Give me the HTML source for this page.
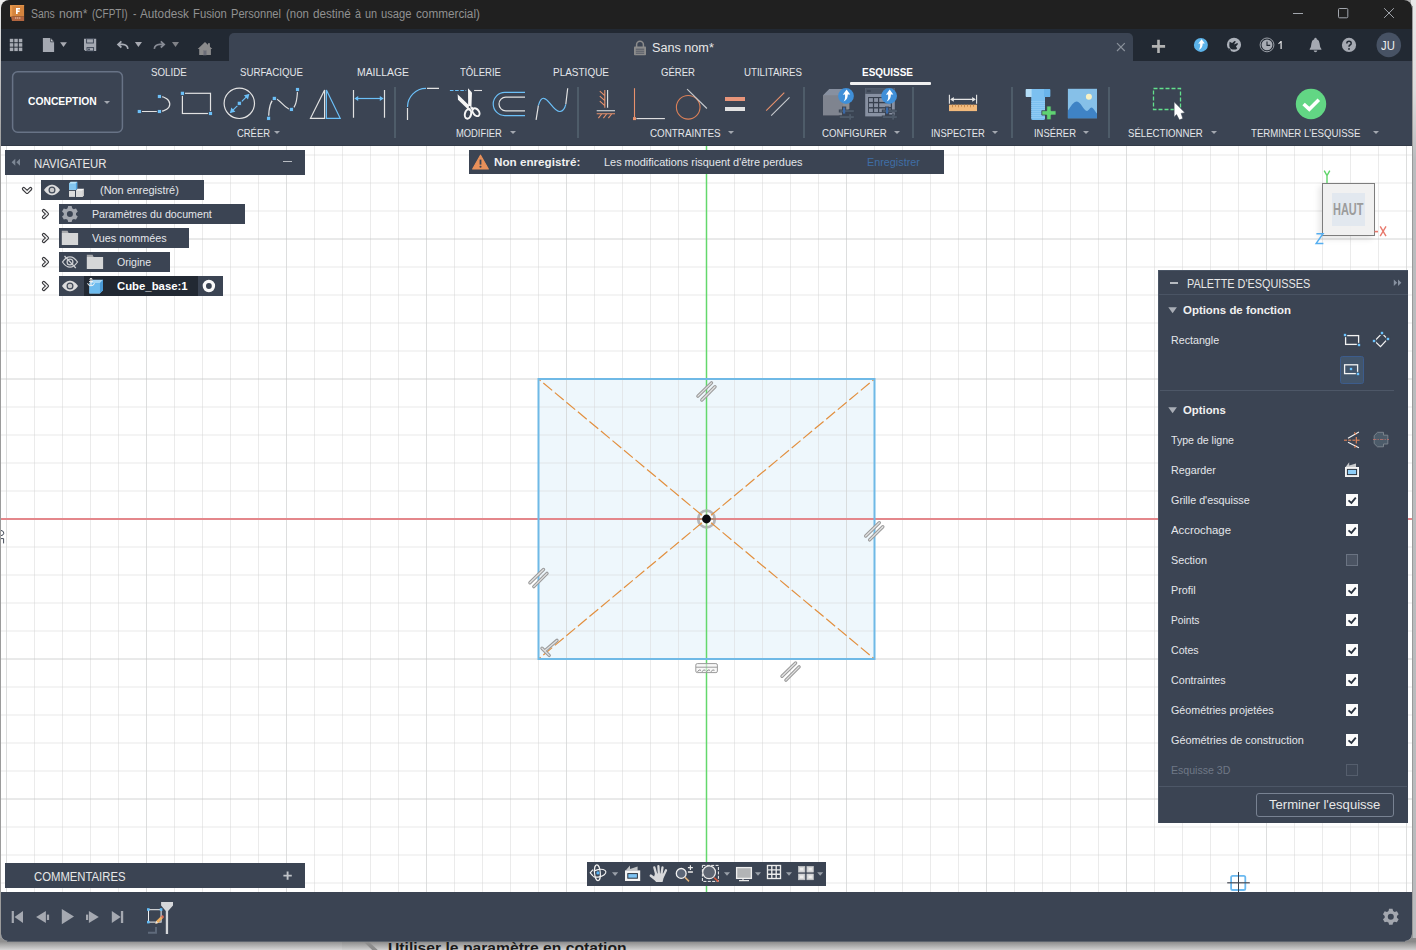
<!DOCTYPE html>
<html lang="fr">
<head>
<meta charset="utf-8">
<title>Sans nom* - Autodesk Fusion</title>
<style>
html,body{margin:0;padding:0;}
body{width:1416px;height:950px;overflow:hidden;position:relative;background:#b2b2b2;font-family:"Liberation Sans",sans-serif;}
#root{position:absolute;left:0;top:0;width:1416px;height:950px;overflow:hidden;}
.t{position:absolute;white-space:nowrap;line-height:1;transform-origin:0 50%;}
.a{position:absolute;}
svg{position:absolute;overflow:visible;}
#win{position:absolute;left:1px;top:0;width:1411px;height:941px;border-radius:8px 8px 7px 7px;overflow:hidden;background:#fff;}
.bx{position:absolute;background:#3b4453;}
.sep{position:absolute;width:2px;top:87px;height:51px;background:#4e5c69;}
.dd{position:absolute;width:0;height:0;border-left:3.2px solid transparent;border-right:3.2px solid transparent;border-top:3.6px solid #a3a8b0;}
.cb{position:absolute;left:1346px;width:12px;height:12px;background:#fbfbfb;}
</style>
</head>
<body>
<div id="root">
<!-- desktop behind the window -->
<div class="a" style="left:0;top:0;width:9px;height:950px;background:linear-gradient(to bottom,#ececec 0,#d4d4d4 40px,#a4a4a4 130px,#9b9b9b 180px,#9b9b9b 100%)"></div>
<div class="a" style="left:1411px;top:0;width:5px;height:950px;background:linear-gradient(to bottom,#e8e8e8 0,#dcdcdc 90px,#babcbe 160px,#b9bbbd 100%)"></div>
<div class="a" style="left:1411px;top:6px;width:2px;height:940px;background:#9a9a9a"></div>
<div class="a" style="left:0;top:938px;width:1416px;height:12px;background:linear-gradient(to bottom,#8a8a8a 0,#8a8a8a 3.6px,#d0d0d0 12px)"></div>
<div class="a" style="left:0;top:938px;width:342px;height:12px;background:linear-gradient(to bottom,#909090 0,#909090 3.6px,#d6d6d6 12px)"></div>
<svg style="left:364px;top:941px" width="16" height="10"><path d="M0.6 1.4L5 1L14.2 9.4H8.6Z" fill="#8c8c8c"/></svg>
<div class="a" style="left:7px;top:941px;width:1398px;height:1px;background:#5d646e"></div>
<span class="t" style="left:388px;top:940.3px;font-size:15.5px;font-weight:700;color:#1a1a1a;transform:scaleX(1.011)">Utiliser le paramètre en cotation</span>
<div id="win">
<!-- title bar -->
<div class="a" style="left:0;top:0;width:1411px;height:29px;background:#202020"></div>
<!-- tab bar -->
<div class="a" style="left:0;top:29px;width:1411px;height:32px;background:#222933"></div>
<div class="a" style="left:228px;top:33px;width:904px;height:28px;background:#3b4453;border-radius:5px 5px 0 0"></div>
<!-- ribbon -->
<div class="a" style="left:0;top:61px;width:1411px;height:85px;background:#3b4453"></div>
<div class="a" style="left:0;top:145px;width:1411px;height:1px;background:#333b48"></div>
<!-- timeline bar -->
<div class="a" style="left:0;top:892px;width:1411px;height:49px;background:#3b4453"></div>
</div>
<svg style="left:0;top:0" width="1416" height="62" viewBox="0 0 1416 62">
<!-- app icon -->
<rect x="10" y="5" width="14.1" height="11.6" fill="#d4843e"/><rect x="10" y="5.6" width="2.3" height="11" fill="#e89a4e"/><path d="M12.3 5H24.1V6.2H12.3Z" fill="#e0934a"/><path d="M11 16.6H24.1V21H12Z" fill="#b4663f"/><path d="M16 8H20V9.5H17.7V10.6H19.6V12H17.7V14H16Z" fill="#ffffff"/><path d="M15 18H16.4M17 18H18.4M19 18H20.4" stroke="#f0d0c0" stroke-width="1"/>
<!-- window controls -->
<g fill="none" stroke="#a2a6ad" stroke-width="1"><path d="M1293 13.5H1303"/><rect x="1338.5" y="8.5" width="9.3" height="9.3" rx="1"/><path d="M1384.1 8.2L1393.9 17.9M1393.9 8.2L1384.1 17.9"/></g>
<!-- data panel grid -->
<g fill="#a7abb3"><rect x="9.8" y="38.8" width="3.5" height="3.5"/><rect x="14.3" y="38.8" width="3.5" height="3.5"/><rect x="18.8" y="38.8" width="3.5" height="3.5"/><rect x="9.8" y="43.2" width="3.5" height="3.5"/><rect x="14.3" y="43.2" width="3.5" height="3.5"/><rect x="18.8" y="43.2" width="3.5" height="3.5"/><rect x="9.8" y="47.6" width="3.5" height="3.5"/><rect x="14.3" y="47.6" width="3.5" height="3.5"/><rect x="18.8" y="47.6" width="3.5" height="3.5"/></g>
<!-- file -->
<path d="M42.9 38.1H50.6L54.1 41.8V52H42.9Z" fill="#a5a9b2"/><path d="M50.6 38.1V41.8H54.1Z" fill="#d0d3d8" stroke="#222933" stroke-width=".7"/>
<path d="M60.1 42.2H66.9L63.5 46.9Z" fill="#a8aab2"/>
<!-- save -->
<path d="M84 38.8H96.2V51H85.4L84 49.6Z" fill="#a5a9b2"/><rect x="86.6" y="38.8" width="6.8" height="4.2" fill="#a5a9b2" stroke="#3a4352" stroke-width=".9"/><rect x="87" y="47.6" width="6.6" height="3.4" fill="#a5a9b2" stroke="#3a4352" stroke-width=".9"/><rect x="88" y="48.6" width="2" height="1.6" fill="#4a5362"/>
<!-- undo / redo -->
<path d="M121.4 41.3L118 44.4L121.4 47.5M118.3 44.4H122.4Q127.4 44.6 127.9 48.8" fill="none" stroke="#a9adb6" stroke-width="1.7"/>
<path d="M134.9 42.1H142L138.4 46.9Z" fill="#a8aab2"/>
<path d="M160.8 41.3L164.2 44.4L160.8 47.5M163.9 44.4H159.8Q154.8 44.6 154.3 48.8" fill="none" stroke="#878b95" stroke-width="1.7"/>
<path d="M172 42.1H179L175.5 46.9Z" fill="#808288"/>
<!-- home -->
<path d="M205 42L212.3 48.9H210.9V55H199.2V48.9H197.7Z" fill="#8b8b8c"/><rect x="208" y="43.2" width="1.9" height="4" fill="#8b8b8c"/><rect x="203.5" y="50.6" width="2.9" height="4.4" fill="#6a6d78" stroke="#7a7a80" stroke-width=".5"/>
<!-- lock -->
<path d="M636.6 47V44.6A3.4 3.4 0 0 1 643.4 44.6V47" fill="none" stroke="#8c8c8c" stroke-width="1.5"/><rect x="634" y="46.6" width="12" height="8.6" rx=".8" fill="#8c8c8c"/><path d="M635.8 49.2H644.2M635.8 51.2H644.2M635.8 53.2H644.2" stroke="#3b4453" stroke-width=".7"/>
<!-- close tab / new tab -->
<path d="M1117 43.2L1124.8 51M1124.8 43.2L1117 51" stroke="#8a919b" stroke-width="1.2"/>
<path d="M1158.5 39.8V53M1151.9 46.4H1165.1" stroke="#b2b2b2" stroke-width="2.6"/>
<!-- extensions badge -->
<circle cx="1200.9" cy="44.9" r="7" fill="#5cb3ea"/><path d="M1201.6 39.2L1204.8 43.6L1202.7 43.4C1202.7 46.2 1201.8 48.4 1198.8 49.8C1200.2 47.8 1200.3 45.6 1200.1 43.4L1198.2 43.7Z" fill="#ffffff"/>
<!-- job status -->
<circle cx="1234" cy="44.85" r="7.05" fill="#adb2bb"/><path d="M1229.6 41.8L1232.1 43.1L1234.6 41L1235.9 41.5L1233.9 44.6L1237.4 43L1238 44.1L1235.9 46.4L1237.2 48.2Q1236.6 49.4 1235.4 49.5H1232.6Q1230.8 49.2 1230.2 48.2Q1229 46.6 1229.3 45.1Z" fill="#222933"/><path d="M1228.6 48.4L1230.6 50.6" stroke="#222933" stroke-width="1.3"/>
<!-- clock -->
<circle cx="1267" cy="44.9" r="6.9" fill="none" stroke="#a7abb3" stroke-width=".9"/><circle cx="1267" cy="44.9" r="5.4" fill="#a7abb3"/><path d="M1267 41.4V45.4H1270.2" fill="none" stroke="#222933" stroke-width="1.1"/>
<path d="M1278.2 43.4L1280.7 41.1H1281.7V49H1280.5V42.8L1278.7 44.3Z" fill="#e8e8ea"/>
<!-- bell -->
<path d="M1315.5 37.8Q1316.6 37.8 1316.8 39.2Q1319.4 40.2 1319.6 43.6Q1319.8 47.6 1321.4 49V49.8H1309.7V49Q1311.2 47.6 1311.4 43.6Q1311.6 40.2 1314.2 39.2Q1314.4 37.8 1315.5 37.8Z" fill="#a5a9b2"/><path d="M1313.6 50.6H1317.4Q1317 52.2 1315.5 52.2Q1314 52.2 1313.6 50.6Z" fill="#a5a9b2"/>
<!-- help -->
<circle cx="1349" cy="44.9" r="7.1" fill="#a5a9b2"/><path d="M1346.8 43.4Q1346.8 41.2 1349 41.2Q1351.2 41.2 1351.2 43.2Q1351.2 44.4 1350 45Q1349 45.6 1349 46.8" fill="none" stroke="#222933" stroke-width="1.5"/><circle cx="1349" cy="48.9" r=".95" fill="#222933"/>
<!-- avatar -->
<circle cx="1388.8" cy="44.9" r="12.3" fill="#475264"/>
</svg>
<!-- ribbon -->
<svg style="left:0;top:60px" width="130" height="80" viewBox="0 60 130 80"><rect x="12.6" y="71.7" width="109.8" height="60.6" rx="5" fill="none" stroke="#687386" stroke-width="1.5"/></svg>
<div class="dd" style="left:104.4px;top:100.6px"></div>
<div class="a" style="left:850px;top:81.6px;width:81px;height:3px;background:#f0f0f0;border-radius:1px"></div>
<div class="sep" style="left:394px"></div><div class="sep" style="left:577px"></div><div class="sep" style="left:803px"></div><div class="sep" style="left:912px"></div><div class="sep" style="left:1011px"></div><div class="sep" style="left:1108px"></div>
<div class="dd" style="left:274px;top:130.9px"></div><div class="dd" style="left:510px;top:130.9px"></div><div class="dd" style="left:727.6px;top:130.9px"></div><div class="dd" style="left:894px;top:130.9px"></div><div class="dd" style="left:992px;top:130.9px"></div><div class="dd" style="left:1083px;top:130.9px"></div><div class="dd" style="left:1210.8px;top:130.9px"></div><div class="dd" style="left:1372.8px;top:130.9px"></div>
<svg style="left:0;top:0" width="1416" height="146" viewBox="0 0 1416 146">
<defs><rect id="bs" x="-2.1" y="-2.1" width="4.2" height="4.2" fill="#6cc0f8" stroke="#3b4453" stroke-width="0.9"/></defs>
<g fill="none" stroke="#e2e2e2" stroke-width="1.2">
<!-- line/arc -->
<path d="M139.3 111.5H159.4M159.4 96.5A10.4 7.5 0 0 1 159.4 111.5"/>
<!-- rectangle -->
<rect x="182.4" y="93.3" width="28.1" height="20.2"/>
<!-- circle -->
<circle cx="239.3" cy="103.3" r="15.2"/>
<!-- spline -->
<path d="M268.6 118.3C268.8 106 271 100.4 274.3 98.4C279.5 98 286 110.5 291.4 109.4C295.6 107.6 297.3 99 297.5 89.5"/>
<!-- mirror -->
<path d="M324.6 90V118.3H310.5Z"/><path d="M326.4 90V118.3H340.2Z" stroke="#6cc0f8"/>
<!-- dimension -->
<path d="M353.5 90V117.8M384.5 90V117.8"/><path d="M356 98.5H382" stroke="#6cc0f8"/>
<!-- fillet -->
<path d="M407.5 108V120M427 88.4H439"/><path d="M407.5 107A18.6 18.6 0 0 1 426 88.4" stroke="#6cc0f8"/>
<!-- trim -->
<path d="M449.9 90.5H466.2" stroke="#6cc0f8" stroke-width="1.1" stroke-dasharray="3.6 1.6"/><path d="M474.1 90.5H482" stroke-width="1.1"/>
<!-- offset -->
<path d="M525 92.4H504.8A11.6 11.6 0 0 0 504.8 115.6H525" stroke="#6cc0f8"/><path d="M525 97.2H505.8A6.8 6.8 0 0 0 505.8 110.8H525"/>
<!-- spline2 -->
<path d="M536.1 119.8L538.4 105.3M565.8 104.3L567.7 88.2"/><path d="M538.4 105.3C540 100 542 98 543.8 98.3C549 98.6 554 112.2 560.1 111.5C563 111 564.8 108.4 565.8 104.3" stroke="#6cc0f8"/>
</g>
<path d="M354.3 98.5L358.2 95.9V101.1ZM383.7 98.5L379.8 95.9V101.1Z" fill="#6cc0f8"/>
<path d="M230.4 112.6L248.9 94.4" stroke="#6cc0f8" stroke-width="1.2"/><path d="M230 113L231.3 107.6L235.4 111.7ZM249.3 94L243.9 95.3L248 99.4Z" fill="#6cc0f8"/>
<use href="#bs" x="139.3" y="111.5"/><use href="#bs" x="159.4" y="111.5"/><use href="#bs" x="159.4" y="96.5"/>
<use href="#bs" x="182.4" y="93.3"/><use href="#bs" x="210.5" y="113.5"/><use href="#bs" x="239.3" y="103.3"/>
<use href="#bs" x="268.6" y="118.3"/><use href="#bs" x="274.3" y="98.4"/><use href="#bs" x="291.4" y="109.4"/><use href="#bs" x="297.5" y="89.5"/>
<!-- scissors -->
<g fill="#f6f6f6"><path d="M468 88.2L472 92.4L471.4 107.6L468.2 108.2Z"/><path d="M457.6 94.2L458 99.8L468.4 109.8L470.8 107Z"/></g>
<g fill="none" stroke="#f6f6f6" stroke-width="2"><ellipse cx="468" cy="114" rx="3.1" ry="4.7" transform="rotate(14 468 114)"/><ellipse cx="476" cy="112.2" rx="2.9" ry="4.4" transform="rotate(-38 476 112.2)"/></g><path d="M469 108L468.6 110M471 107.6L473.6 109.4" stroke="#f6f6f6" stroke-width="2.4"/><circle cx="469.6" cy="107" r=".9" fill="#3b4453"/>
<!-- constraints -->
<g fill="none" stroke-width="1.1"><path d="M604.8 90V107.7M599.8 91.2L604.8 95.6M599.8 96.2L604.8 100.6M599.8 101.2L604.8 105.6M596.7 113.7H615M601.6 114L598.4 118.2M606.6 114L603.4 118.2M611.6 114L608.4 118.2" stroke="#e8916c"/><path d="M607.6 90V107.7M596.7 110.7H615" stroke="#e6e6e6"/>
<path d="M634.5 88.2V117.4" stroke="#e8916c"/><path d="M636.4 118.6H664.9" stroke="#e6e6e6"/>
<circle cx="688.2" cy="107.3" r="11.8" stroke="#dc8058"/><path d="M687.1 89.2L706.9 108.5" stroke="#c8ccd0"/>
<path d="M766.2 110.7L784.3 92.6" stroke="#e8916c"/><path d="M771.2 115.6L789.5 97.3" stroke="#c8ccd0"/></g>
<rect x="633" y="117.1" width="3" height="3" fill="#e8916c"/>
<rect x="725" y="97" width="20" height="4" fill="#e8957a"/><rect x="725" y="107" width="20" height="4" fill="#e2e2e2"/>
<!-- configure 1 -->
<path d="M823 95.4L829.4 89H849.4V108.8L843 115.2H823Z" fill="#8c8d90"/><path d="M823 95.4L829.4 89H849.4L843 95.4Z" fill="#8790a0"/><rect x="823" y="95.4" width="20" height="19.8" fill="#7f848f"/>
<g id="giz"><path d="M838.8 109.4H842V106.6H846.2V109.4H854.6V112.6H846.2V114.4H849V113.4H851.4V115.6H854.6V118.6H851.4V120.4H849V118.6H838.8V115.6H842V112.6H838.8Z" fill="#3b4453"/><rect x="839.8" y="110.1" width="14" height="1.9" fill="#4e5a69"/><rect x="839.8" y="116.1" width="14" height="1.9" fill="#4e5a69"/><rect x="843" y="107.5" width="2.2" height="6.1" fill="#3a69a8"/><rect x="849.2" y="114.2" width="1.8" height="5.4" fill="#4e5a69"/></g>
<g id="badge"><circle cx="846" cy="96" r="7.9" fill="#3f8fd8"/><path d="M846.6 89.6L850.2 94.6L847.8 94.4C847.8 97.6 846.8 100 843.6 101.6C845.2 99.4 845.2 97 845 94.4L842.8 94.8Z" fill="#ffffff"/></g>
<!-- configure 2 -->
<rect x="865.2" y="88.1" width="29.6" height="28.3" fill="#8891a2"/><rect x="865.2" y="88.1" width="29.6" height="5.8" fill="#4b5564"/><rect x="867" y="90.2" width="3.8" height="1.6" fill="#3b4453"/><rect x="868.1" y="97" width="23.8" height="15.9" fill="#363f4d"/>
<g fill="#8891a2"><rect x="869" y="98.1" width="3.9" height="3.8"/><rect x="874.1" y="98.1" width="3.9" height="3.8"/><rect x="879.2" y="98.1" width="11.6" height="3.8"/><rect x="869" y="103.3" width="3.9" height="3.8"/><rect x="874.1" y="103.3" width="3.9" height="3.8"/><rect x="879.2" y="103.3" width="11.6" height="3.8"/><rect x="869" y="108.5" width="3.9" height="3.6"/><rect x="874.1" y="108.5" width="3.9" height="3.6"/><rect x="879.2" y="108.5" width="11.6" height="3.6"/></g>
<use href="#giz" x="43"/><use href="#badge" x="43.1"/>
<!-- inspect -->
<rect x="949" y="104.7" width="28" height="6.4" fill="#f2ba7c"/><path d="M952.5 104.7v2.6M955.5 104.7v2M958.5 104.7v2.6M961.5 104.7v2M964.5 104.7v2.6M967.5 104.7v2M970.5 104.7v2.6M973.5 104.7v2" stroke="#c88a4c" stroke-width="1"/>
<path d="M949.4 94.8V103.8M976.6 94.8V103.8M951 99.4H975" stroke="#e6e6e6" stroke-width="1.1" fill="none"/><path d="M950.2 99.4L953.8 97V101.8ZM975.8 99.4L972.2 97V101.8Z" fill="#e6e6e6"/>
<!-- insert bolt -->
<path d="M1026.6 89H1049.4Q1050.2 89 1050.2 89.8V96.2Q1050.2 97 1049.4 97H1026.6Q1025.8 97 1025.8 96.2V89.8Q1025.8 89 1026.6 89Z" fill="#7cc0f0"/><path d="M1026.6 89H1031.6V97H1026.6Q1025.8 97 1025.8 96.2V89.8Q1025.8 89 1026.6 89Z" fill="#b4ddf6"/><path d="M1044 89H1049.4Q1050.2 89 1050.2 89.8V96.2Q1050.2 97 1049.4 97H1044Z" fill="#6ab4ea"/>
<path d="M1031.2 97H1045V118.4Q1045 120 1043.4 120H1032.8Q1031.2 120 1031.2 118.4Z" fill="#7cc0f0"/><path d="M1031.2 101.5H1045M1031.2 103.5H1045M1031.2 105.5H1045M1031.2 107.5H1045M1031.2 109.5H1045M1031.2 111.5H1045M1031.2 113.5H1045M1031.2 115.5H1045M1031.2 117.5H1045" stroke="#98d0f6" stroke-width=".7"/>
<path d="M1046.7 106H1051.1V110.7H1056V115.1H1051.1V119.8H1046.7V115.1H1041.8V110.7H1046.7Z" fill="#5fd272" stroke="#3b4453" stroke-width=".8"/>
<!-- insert image -->
<rect x="1067.9" y="88.8" width="29.1" height="29.4" fill="#86c0e8"/><path d="M1067.9 110.5C1071 106 1073.6 101.4 1076.9 101.4C1080.6 101.6 1083.4 110 1087 111C1088.8 110.6 1089.8 107.4 1091.5 107.4C1093.4 107.6 1095 111.4 1097 113.4V118.2H1067.9Z" fill="#3f83c5"/><circle cx="1088.9" cy="96.8" r="3" fill="#f8f1c4"/>
<!-- select -->
<rect x="1153.5" y="88.5" width="27" height="21" fill="none" stroke="#62e08c" stroke-width="1.3" stroke-dasharray="4 2" stroke-dashoffset="0"/>
<path d="M1174.1 101.8L1185 112.7L1181.2 113.4L1182.9 118.6L1179.4 120L1176.5 114.6L1174.1 117.2Z" fill="#ffffff" stroke="#3b4453" stroke-width=".6"/>
<!-- finish sketch -->
<circle cx="1311" cy="104.05" r="15.2" fill="#62d684"/><path d="M1303.6 104L1309.3 109.2L1318.8 99.8" fill="none" stroke="#ffffff" stroke-width="3.6"/>
</svg>
<!-- canvas -->
<svg style="left:0;top:0" width="1416" height="950" viewBox="0 0 1416 950">
<defs><clipPath id="cv"><rect x="1" y="146" width="1411" height="746"/></clipPath></defs>
<g clip-path="url(#cv)">
<rect x="538.5" y="379" width="336" height="280" fill="#eef7fc"/>
<path d="M-21.5 146V892M34.5 146V892M62.5 146V892M90.5 146V892M118.5 146V892M174.5 146V892M202.5 146V892M230.5 146V892M258.5 146V892M314.5 146V892M342.5 146V892M370.5 146V892M398.5 146V892M454.5 146V892M482.5 146V892M510.5 146V892M538.5 146V892M594.5 146V892M622.5 146V892M650.5 146V892M678.5 146V892M734.5 146V892M762.5 146V892M790.5 146V892M818.5 146V892M874.5 146V892M902.5 146V892M930.5 146V892M958.5 146V892M1014.5 146V892M1042.5 146V892M1070.5 146V892M1098.5 146V892M1154.5 146V892M1182.5 146V892M1210.5 146V892M1238.5 146V892M1294.5 146V892M1322.5 146V892M1350.5 146V892M1378.5 146V892M1434.5 146V892" stroke="#d8d8d8" stroke-opacity=".5" stroke-width="1" fill="none"/>
<path d="M6.5 146V892M146.5 146V892M286.5 146V892M426.5 146V892M566.5 146V892M846.5 146V892M986.5 146V892M1126.5 146V892M1266.5 146V892M1406.5 146V892" stroke="#cfd0d0" stroke-opacity=".7" stroke-width="1" fill="none"/>
<path d="M0 127H1416M0 155H1416M0 183H1416M0 211H1416M0 267H1416M0 295H1416M0 323H1416M0 351H1416M0 407H1416M0 435H1416M0 463H1416M0 491H1416M0 547H1416M0 575H1416M0 603H1416M0 631H1416M0 687H1416M0 715H1416M0 743H1416M0 771H1416M0 827H1416M0 855H1416M0 883H1416M0 911H1416" stroke="#d8d8d8" stroke-opacity=".55" stroke-width="1" fill="none"/>
<path d="M0 239H1416M0 379H1416M0 659H1416M0 799H1416" stroke="#c4c6c6" stroke-opacity=".75" stroke-width="1" fill="none"/>
<path d="M0 519H1416" stroke="#e4878b" stroke-width="2" fill="none"/>
<path d="M706.5 146V892" stroke="#63d86c" stroke-width="1.5" fill="none"/>
<circle cx="706.5" cy="519" r="8.3" fill="#fff" fill-opacity=".75" stroke="#b4b5b9" stroke-width="2.8"/>
<path d="M697 519H716" stroke="#b98a78" stroke-width="2"/>
<path d="M706.5 509.5V528.5" stroke="#8fc98a" stroke-width="1.5"/>
<path d="M706.5 519L538.5 379M706.5 519L874.5 379M706.5 519L538.5 659M706.5 519L874.5 659" stroke="#e28f3e" stroke-width="1.2" stroke-dasharray="11.5 3.5" stroke-dashoffset="9.1" fill="none"/>
<circle cx="706.5" cy="519" r="4.4" fill="#0b0b12"/>
<rect x="538.5" y="379" width="336" height="280" fill="none" stroke="#6fb9e6" stroke-width="2"/>
<path d="M697.9 396.1L711.5 382.9" stroke="#9a9a9a" stroke-width="3.4" stroke-linecap="round"/><path d="M697.9 396.1L711.5 382.9" stroke="#e2e2e2" stroke-width="1.3" stroke-linecap="round"/>
<path d="M701.8 400.0L715.0 386.8" stroke="#9a9a9a" stroke-width="3.4" stroke-linecap="round"/><path d="M701.8 400.0L715.0 386.8" stroke="#e2e2e2" stroke-width="1.3" stroke-linecap="round"/>
<path d="M865.7 536.0L879.3 522.8" stroke="#9a9a9a" stroke-width="3.4" stroke-linecap="round"/><path d="M865.7 536.0L879.3 522.8" stroke="#e2e2e2" stroke-width="1.3" stroke-linecap="round"/>
<path d="M869.6 539.9L882.8 526.7" stroke="#9a9a9a" stroke-width="3.4" stroke-linecap="round"/><path d="M869.6 539.9L882.8 526.7" stroke="#e2e2e2" stroke-width="1.3" stroke-linecap="round"/>
<path d="M529.9 582.7L543.5 569.5" stroke="#9a9a9a" stroke-width="3.4" stroke-linecap="round"/><path d="M529.9 582.7L543.5 569.5" stroke="#e2e2e2" stroke-width="1.3" stroke-linecap="round"/>
<path d="M533.8 586.6L547.0 573.4" stroke="#9a9a9a" stroke-width="3.4" stroke-linecap="round"/><path d="M533.8 586.6L547.0 573.4" stroke="#e2e2e2" stroke-width="1.3" stroke-linecap="round"/>
<path d="M782.0 676.2L795.6 663.0" stroke="#9a9a9a" stroke-width="3.4" stroke-linecap="round"/><path d="M782.0 676.2L795.6 663.0" stroke="#e2e2e2" stroke-width="1.3" stroke-linecap="round"/>
<path d="M785.9 680.1L799.1 666.9" stroke="#9a9a9a" stroke-width="3.4" stroke-linecap="round"/><path d="M785.9 680.1L799.1 666.9" stroke="#e2e2e2" stroke-width="1.3" stroke-linecap="round"/>
<path d="M545.2 650.5L557 640.4M542 648.3L549.2 655.4" stroke="#9a9a9a" stroke-width="3.4" stroke-linecap="round"/><path d="M545.2 650.5L557 640.4M542 648.3L549.2 655.4" stroke="#e2e2e2" stroke-width="1.3" stroke-linecap="round"/>
<rect x="695.8" y="663.6" width="21.6" height="9" rx="1.5" fill="#f4f4f4" fill-opacity=".6" stroke="#9a9a9a" stroke-width="1"/><path d="M696 667.2H717.2" stroke="#9a9a9a" stroke-width="1"/><path d="M697.5 671.8q1.5-3 3.5-1.5M702 671.8q1.5-3 3.5-1.5M706.5 671.8q1.5-3 3.5-1.5M711 671.8q1.5-3 3.5-1.5" stroke="#8c8c8c" stroke-width="1" fill="none"/>
<path d="M1 530.4Q4 531 3.8 533.2Q3.6 535.4 1 535.6M1 538.6H3.6V543.4" fill="none" stroke="#454d5a" stroke-width="1"/>
</g>
</svg>
<!-- navigator -->
<div class="bx" style="left:5px;top:150px;width:300px;height:25px"></div>
<svg style="left:11px;top:158px" width="10" height="9"><path d="M4.3 0.8L0.6 4.3L4.3 7.8ZM9 0.8L5.3 4.3L9 7.8Z" fill="#7d8795"/></svg>
<div class="a" style="left:283px;top:160.6px;width:9px;height:1.6px;background:#b8bcc2"></div>
<div class="bx" style="left:41px;top:180px;width:163px;height:20px"></div>
<div class="bx" style="left:59px;top:204px;width:186px;height:20px"></div>
<div class="bx" style="left:59px;top:228px;width:130px;height:20px"></div>
<div class="bx" style="left:59px;top:252px;width:111px;height:20px"></div>
<div class="bx" style="left:59px;top:276px;width:164px;height:20px"></div>
<div class="a" style="left:84px;top:276px;width:114px;height:20px;background:#222933"></div>
<svg style="left:0;top:0" width="320" height="310" viewBox="0 0 320 310">
<!-- chevrons -->
<path d="M23.7 188.8L27.1 192.1L30.5 188.8" fill="none" stroke="#38383c" stroke-width="3.7" stroke-linejoin="round" stroke-linecap="round"/>
<path d="M23.7 188.8L27.1 192.1L30.5 188.8" fill="none" stroke="#f4f4f4" stroke-width="1.5" stroke-linejoin="round" stroke-linecap="round"/>
<g id="chev"><path d="M43.7 210.7L47.2 214L43.7 217.3" fill="none" stroke="#38383c" stroke-width="3.7" stroke-linejoin="round" stroke-linecap="round"/>
<path d="M43.7 210.7L47.2 214L43.7 217.3" fill="none" stroke="#f4f4f4" stroke-width="1.5" stroke-linejoin="round" stroke-linecap="round"/></g>
<use href="#chev" y="24"/><use href="#chev" y="48"/><use href="#chev" y="72"/>
<!-- eye row1 -->
<g id="eye"><path d="M44 190C47 185.6 50 184.7 52 184.7S57 185.6 60 190C57 194.4 54 195.3 52 195.3S47 194.4 44 190Z" fill="#dcdcdd"/><circle cx="52" cy="190" r="2.9" fill="#c8c8c9" stroke="#414a59" stroke-width="1.2"/></g>
<use href="#eye" x="18" y="96"/>
<!-- eye off row4 -->
<path d="M62.5 262C65.5 257.6 68.5 256.8 70 256.8S74.5 257.6 77.5 262C74.5 266.4 71.5 267.2 70 267.2S65.5 266.4 62.5 262Z" fill="none" stroke="#cdcfd2" stroke-width="1.25"/><circle cx="70" cy="262" r="2.9" fill="none" stroke="#cdcfd2" stroke-width="1.25"/><path d="M64.5 256L75.8 268" stroke="#cdcfd2" stroke-width="1.25"/>
<!-- component icon -->
<path d="M69 183.5L70.6 181.8H77.2V188.2L75.8 189.9H69Z" fill="#b9e3f8"/><path d="M69 183.5H75.8V189.9H69Z" fill="#84c6ee"/><path d="M75.8 183.5L77.2 181.8V188.2L75.8 189.9Z" fill="#4ba1e0"/>
<rect x="69" y="190.9" width="6" height="6" fill="#dcdcdc"/>
<path d="M76 190.5L77.6 188.8H84V195.2L82.4 197H76Z" fill="#f6f6f6"/><path d="M76 190.5H82.4V197H76Z" fill="#dadada"/><path d="M82.4 190.5L84 188.8V195.2L82.4 197Z" fill="#c4c4c4"/>
<!-- gear -->
<g transform="translate(69.9 214.05)"><path id="gearp" d="M2.30 -5.70L1.75 -8.05 L-1.75 -8.05 L-2.30 -5.70A6.00 6.00 0 0 0 -3.79 -4.84L-6.10 -5.54 L-7.85 -2.51 L-6.09 -0.86A6.00 6.00 0 0 0 -6.09 0.86L-7.85 2.51 L-6.10 5.54 L-3.79 4.84A6.00 6.00 0 0 0 -2.30 5.70L-1.75 8.05 L1.75 8.05 L2.30 5.70A6.00 6.00 0 0 0 3.79 4.84L6.10 5.54 L7.85 2.51 L6.09 0.86A6.00 6.00 0 0 0 6.09 -0.86L7.85 -2.51 L6.10 -5.54 L3.79 -4.84A6.00 6.00 0 0 0 2.30 -5.70 ZM0 -3.00a3.00 3.00 0 1 0 0 6.00a3.00 3.00 0 1 0 0 -6.00z" fill="#a3a7af" fill-rule="evenodd"/></g>
<!-- folders -->
<g id="fold"><path d="M61.8 230.8H67.6L68.6 233H61.8Z" fill="#a9abae"/><rect x="61.8" y="233" width="16.3" height="12" fill="#d5d6d7"/></g>
<use href="#fold" x="25" y="24"/>
<!-- cube row5 -->
<path d="M89.4 283L92.6 279.8H103V290.2L99.8 293.4H89.4Z" fill="#a6d7f6"/><path d="M89.4 283H99.8V293.4H89.4Z" fill="#6dbbee"/><path d="M99.8 283L103 279.8V290.2L99.8 293.4Z" fill="#4a9bd7"/>
<g stroke="#f4f4f4" stroke-width="1" fill="none"><circle cx="91" cy="279.3" r="1"/><path d="M91 280.3V285.6M89 281.6H93M87.6 283.2Q88 285.8 91 285.8Q94 285.8 94.4 283.2"/></g>
<!-- radio -->
<circle cx="208.9" cy="286" r="4.55" fill="#3b4453" stroke="#fafafa" stroke-width="3.3"/>
</svg>
<!-- notification bar -->
<div class="bx" style="left:469px;top:150px;width:475px;height:24px"></div>
<svg style="left:472px;top:153.6px" width="18" height="17" viewBox="0 0 18 17"><path d="M8.5 1.2L16.3 15H0.7Z" fill="#e8905a" stroke="#e8905a" stroke-width="1.2" stroke-linejoin="round"/><path d="M8.5 5.6V10.6" stroke="#3b4453" stroke-width="1.8"/><circle cx="8.5" cy="12.8" r="1.05" fill="#3b4453"/></svg>
<!-- sketch palette -->
<div class="bx" style="left:1158px;top:270px;width:249px;height:552px;border-left:1px solid #4a5565;border-top:1px solid #4a5565"></div>
<div class="a" style="left:1158px;top:294px;width:250px;height:1px;background:#4a5464"></div>
<div class="a" style="left:1160px;top:390px;width:234px;height:1px;background:#4d5767"></div>
<div class="a" style="left:1159px;top:786px;width:248px;height:1px;background:#4d5767"></div>
<div class="a" style="left:1170px;top:282px;width:8px;height:1.7px;background:#b6bac0"></div>
<svg style="left:1393px;top:279px" width="10" height="8"><path d="M0.8 0.6L4.2 3.8L0.8 7ZM5 0.6L8.4 3.8L5 7Z" fill="#8791a0"/></svg>
<svg style="left:1168px;top:307.3px" width="10" height="7"><path d="M0.3 0.3H8.9L4.6 6.2Z" fill="#a9aeb6"/></svg>
<svg style="left:1168px;top:406.9px" width="10" height="7"><path d="M0.3 0.3H8.9L4.6 6.2Z" fill="#a9aeb6"/></svg>
<div class="a" style="left:1340px;top:356px;width:22px;height:26px;background:#42556b;border:1px solid #3c5c8c;border-radius:2.5px"></div>
<svg style="left:0;top:0" width="1416" height="830" viewBox="0 0 1416 830">
<rect x="1345.6" y="335.6" width="13" height="8.8" fill="none" stroke="#f2f2f2" stroke-width="1.3"/><rect x="1343.30" y="333.30" width="3.4" height="3.4" fill="#6cc4ff" stroke="#3b4453" stroke-width="0.9"/><rect x="1357.30" y="343.30" width="3.4" height="3.4" fill="#6cc4ff" stroke="#3b4453" stroke-width="0.9"/>
<path d="M1382 333.4L1387.6 339L1380.5 346.6L1374.6 341Z" fill="none" stroke="#f2f2f2" stroke-width="1.2" /><rect x="1380.30" y="331.30" width="3.4" height="3.4" fill="#6cc4ff" stroke="#3b4453" stroke-width="0.9"/><rect x="1386.30" y="337.30" width="3.4" height="3.4" fill="#6cc4ff" stroke="#3b4453" stroke-width="0.9"/><rect x="1372.30" y="339.30" width="3.4" height="3.4" fill="#6cc4ff" stroke="#3b4453" stroke-width="0.9"/>
<rect x="1344.6" y="364.8" width="13" height="8.8" fill="none" stroke="#f2f2f2" stroke-width="1.3"/><rect x="1349.30" y="367.30" width="3.4" height="3.4" fill="#6cc4ff" stroke="#42556b" stroke-width="0.9"/><rect x="1356.30" y="372.30" width="3.4" height="3.4" fill="#6cc4ff" stroke="#42556b" stroke-width="0.9"/>
<path d="M1344 440.2H1360" stroke="#f08a5a" stroke-width="1" stroke-dasharray="3 1.2"/><path d="M1348 438.3L1358.9 432.1M1348 442.2L1358.9 447.7" stroke="#f0f0f0" stroke-width="1.1"/><path d="M1356.3 437V443.4M1354.4 432.4L1356 434.8M1354.6 447.6L1356 445.4" stroke="#f08a5a" stroke-width="1.1"/>
<path d="M1377.5 432.3H1383.5V435.2H1387.8V444H1383.5V446.8H1377.5L1374.2 443.6V435.6Z" fill="#4c5b69" stroke="#7f8891" stroke-width=".9"/><path d="M1373 439.5H1389" stroke="#b0706c" stroke-width=".9" stroke-dasharray="3.4 1.2 1.2 1.2"/>
<path d="M1345.6 467L1349.2 462.2V465.6L1356 463.6V467Z" fill="#c8cacc"/><rect x="1345" y="467" width="14" height="10" fill="#f4f4f4"/><rect x="1347.4" y="469.4" width="9.2" height="5.2" fill="#8ecdf7" stroke="#2a3340" stroke-width="1"/>
<rect x="1346" y="494" width="12" height="12" fill="#fbfbfb"/><path d="M1348.5 500.3L1351.4 502.9L1355.8 497.6" fill="none" stroke="#27303d" stroke-width="1.8"/>
<rect x="1346" y="524" width="12" height="12" fill="#fbfbfb"/><path d="M1348.5 530.3L1351.4 532.9L1355.8 527.6" fill="none" stroke="#27303d" stroke-width="1.8"/>
<rect x="1346.5" y="554.5" width="11" height="11" fill="#4b5463" stroke="#6a7382" stroke-width="1"/>
<rect x="1346" y="584" width="12" height="12" fill="#fbfbfb"/><path d="M1348.5 590.3L1351.4 592.9L1355.8 587.6" fill="none" stroke="#27303d" stroke-width="1.8"/>
<rect x="1346" y="614" width="12" height="12" fill="#fbfbfb"/><path d="M1348.5 620.3L1351.4 622.9L1355.8 617.6" fill="none" stroke="#27303d" stroke-width="1.8"/>
<rect x="1346" y="644" width="12" height="12" fill="#fbfbfb"/><path d="M1348.5 650.3L1351.4 652.9L1355.8 647.6" fill="none" stroke="#27303d" stroke-width="1.8"/>
<rect x="1346" y="674" width="12" height="12" fill="#fbfbfb"/><path d="M1348.5 680.3L1351.4 682.9L1355.8 677.6" fill="none" stroke="#27303d" stroke-width="1.8"/>
<rect x="1346" y="704" width="12" height="12" fill="#fbfbfb"/><path d="M1348.5 710.3L1351.4 712.9L1355.8 707.6" fill="none" stroke="#27303d" stroke-width="1.8"/>
<rect x="1346" y="734" width="12" height="12" fill="#fbfbfb"/><path d="M1348.5 740.3L1351.4 742.9L1355.8 737.6" fill="none" stroke="#27303d" stroke-width="1.8"/>
<rect x="1346.5" y="764.5" width="11" height="11" fill="#3e4756" stroke="#555e6d" stroke-width="1"/>
</svg>
<div class="a" style="left:1256px;top:793px;width:136px;height:22px;border:1px solid #788292;border-radius:3px"></div>
<!-- viewcube -->
<div class="a" style="left:1322px;top:183px;width:52.7px;height:52.5px;box-sizing:border-box;background:rgba(240,240,240,.93);border:1.5px solid #7d7d7d;box-shadow:-3px 3px 6px rgba(0,0,0,.10)"></div>
<div class="a" style="left:1332px;top:193px;width:33px;height:33px;background:rgba(224,231,238,.9)"></div>
<svg style="left:1300px;top:160px" width="100" height="95" viewBox="1300 160 100 95"><path d="M1324.2 170.6L1327 175.6L1329.8 170.6M1327 175.6V183" fill="none" stroke="#5fd46a" stroke-width="1.4"/><path d="M1380.2 226.4L1386 236.2M1386 226.4L1380.2 236.2" stroke="#e87a6e" stroke-width="1.4"/><path d="M1374.5 231.6H1378" stroke="#e87a6e" stroke-width="1.6"/><path d="M1316.4 233.8H1323L1316.2 243.4H1323.4" fill="none" stroke="#55aef0" stroke-width="1.5"/></svg>
<!-- comments bar -->
<div class="bx" style="left:5px;top:863px;width:300px;height:25px"></div>
<svg style="left:283px;top:871px" width="10" height="10"><path d="M4.6 0.4V8.8M0.4 4.6H8.8" stroke="#bfc3c8" stroke-width="1.9"/></svg>
<!-- navigation toolbar -->
<div class="bx" style="left:587px;top:862px;width:239px;height:24px"></div>
<svg style="left:0;top:0" width="1416" height="950" viewBox="0 0 1416 950">
<!-- orbit -->
<g fill="none" stroke="#f2f2f2" stroke-width="1.15"><ellipse cx="597.4" cy="872.8" rx="2.9" ry="7.9" transform="rotate(-5 597.4 872.8)"/><ellipse cx="598.7" cy="873.2" rx="7.3" ry="3.7" transform="rotate(-12 598.7 873.2)" stroke-dasharray="15.2 6.6 15.2"/><path d="M593 869.7L590.2 872.8L593 876"/></g><circle cx="597.9" cy="872.9" r="1.6" fill="#58b4f4"/>
<!-- look at -->
<path d="M625.6 870.4L630 865.4V869L637.6 866.6V870.4Z" fill="#c2c4c7"/><rect x="625" y="870.4" width="15.2" height="10.6" fill="#f4f4f4"/><rect x="627.8" y="873.6" width="9.6" height="4.6" fill="#7dc3f3" stroke="#2c3542" stroke-width="1"/>
<!-- hand -->
<path d="M655 873.4H663.4L664.2 875.6L662.6 882H656L653.6 878Z" fill="#d8d9db"/><g stroke="#d8d9db" stroke-linecap="round" fill="none"><path d="M654.3 867.3L656.3 874.6M658.4 866.1L658.9 874.6M662.5 867.3L661.4 874.6M666 870.3L663 876.6" stroke-width="2.3"/><path d="M650.9 875.7L656 879.6" stroke-width="2.7"/></g>
<!-- zoom -->
<circle cx="681.2" cy="873.4" r="4.9" fill="#5d6778" stroke="#f2f2f2" stroke-width="1.3"/><path d="M685 877.4L689 881.4" stroke="#e2b27a" stroke-width="1.5"/><path d="M690.4 865.2V870M687.9 867.6H692.9" stroke="#ececec" stroke-width="1.2"/><path d="M687.9 872H692.9" stroke="#d8d8da" stroke-width="1.7"/>
<!-- zoom window -->
<rect x="702.4" y="865.4" width="16" height="16" fill="none" stroke="#f2f2f2" stroke-width="1" stroke-dasharray="3 1.4"/><circle cx="709.1" cy="872.3" r="6.4" fill="#5e6572" stroke="#e8e8e8" stroke-width="1.2"/><path d="M714.2 877.6L718.4 881.6" stroke="#d4553a" stroke-width="1.5"/>
<!-- monitor -->
<rect x="736.6" y="867.6" width="14.8" height="10.8" fill="#b2b4b6" stroke="#eeeeee" stroke-width="1.3"/><path d="M743 879V880.4M739 880.6H749" stroke="#e8e8e8" stroke-width="1.2"/>
<!-- grid -->
<g fill="none" stroke="#ececec" stroke-width="1.35"><rect x="767.5" y="865.5" width="13" height="13"/><path d="M771.8 865.5V878.5M776.2 865.5V878.5M767.5 869.8H780.5M767.5 874.2H780.5"/></g>
<!-- viewports -->
<g fill="#d8d9da" stroke="#c2c4c6" stroke-width=".6"><rect x="798.3" y="866.3" width="6.6" height="5.8"/><rect x="806.9" y="866.3" width="6.6" height="5.8"/><rect x="798.3" y="874" width="6.6" height="5.8"/><rect x="806.9" y="874" width="6.6" height="5.8"/></g><g fill="#eeeeee"><rect x="800" y="868" width="3.2" height="2.4"/><rect x="808.6" y="868" width="3.2" height="2.4"/><rect x="800" y="875.7" width="3.2" height="2.4"/><rect x="808.6" y="875.7" width="3.2" height="2.4"/></g>
<!-- dropdown arrows -->
<g fill="#9aa0a9"><path d="M612 872.2H618.2L615.1 876Z"/><path d="M724 872.3H730L727 875.8Z"/><path d="M755 872.3H761L758 875.8Z"/><path d="M786 872.3H792L789 875.8Z"/><path d="M817.2 872.3H823.2L820.2 875.8Z"/></g>
<!-- crosshair cursor -->
<rect x="1231.1" y="875.8" width="14.2" height="14.2" rx="1.6" fill="none" stroke="#6bb9f0" stroke-width="1.8"/><path d="M1238.5 872V892" stroke="#39404c" stroke-width="1"/><path d="M1227.2 882.8H1249.8" stroke="#454a55" stroke-width="1.2"/>
<!-- timeline -->
<g fill="#a5a9b1"><rect x="11.7" y="911" width="2.2" height="12"/><path d="M23 911V923L14.5 917Z"/><path d="M45.9 911V923L36.1 917Z"/><rect x="46.9" y="914.6" width="2.2" height="5.4"/><path d="M61.8 909V924.2L74 916.6Z"/><rect x="86" y="914.6" width="2.2" height="5.4"/><path d="M88.9 911V923L98.8 917Z"/><path d="M111.8 911V923L120.7 917Z"/><rect x="120.9" y="911" width="2.3" height="12"/></g>
<rect x="148.5" y="909.7" width="12.6" height="12.4" fill="none" stroke="#f0f0f0" stroke-width="1"/><g fill="#62bdf8"><rect x="147" y="908.2" width="2.6" height="2.6"/><rect x="159.8" y="908.2" width="2.6" height="2.6"/><rect x="147" y="920.8" width="2.6" height="2.6"/></g>
<path d="M155.4 923.8L156.2 921L160.8 916.6L162.8 918.6L158.2 923Z" fill="#f0b060"/><path d="M160.8 916.6L161.8 915.6Q162.8 915 163.6 916L163.8 917.6L162.8 918.6Z" fill="#e0705a"/><path d="M155.4 923.8L156.2 921L158.2 923Z" fill="#e8e8e8"/>
<path d="M148 932.8H156M156 927V933.7" stroke="#5f6a7b" stroke-width="1.9" fill="none"/>
<path d="M161.1 902H173V905.6L168.1 911V934H165.8V911L161.1 905.6Z" fill="#d5d7da"/>
<!-- settings gear -->
<g transform="translate(1390.8 916.8)"><use href="#gearp" fill="#a9adb6"/></g>
</svg>
<!-- texts -->
<span class="t" style="left:31.40px;top:7.54px;font-size:12px;color:#919191;transform:scaleX(0.8701);">Sans</span>
<span class="t" style="left:58.90px;top:7.54px;font-size:12px;color:#919191;transform:scaleX(1.0173);">nom*</span>
<span class="t" style="left:92.00px;top:7.54px;font-size:12px;color:#919191;transform:scaleX(0.8322);">(CFPTI)</span>
<span class="t" style="left:132.60px;top:7.54px;font-size:12px;color:#919191;transform:scaleX(0.8507);">-</span>
<span class="t" style="left:139.70px;top:7.54px;font-size:12px;color:#919191;transform:scaleX(0.9773);">Autodesk</span>
<span class="t" style="left:192.80px;top:7.54px;font-size:12px;color:#919191;transform:scaleX(0.9412);">Fusion</span>
<span class="t" style="left:231.00px;top:7.54px;font-size:12px;color:#919191;transform:scaleX(0.9253);">Personnel</span>
<span class="t" style="left:285.60px;top:7.54px;font-size:12px;color:#919191;transform:scaleX(0.9534);">(non</span>
<span class="t" style="left:312.90px;top:7.54px;font-size:12px;color:#919191;transform:scaleX(0.9743);">destiné</span>
<span class="t" style="left:354.50px;top:7.54px;font-size:12px;color:#919191;transform:scaleX(0.8990);">à</span>
<span class="t" style="left:364.90px;top:7.54px;font-size:12px;color:#919191;transform:scaleX(0.9065);">un</span>
<span class="t" style="left:381.40px;top:7.54px;font-size:12px;color:#919191;transform:scaleX(0.9328);">usage</span>
<span class="t" style="left:416.00px;top:7.54px;font-size:12px;color:#919191;transform:scaleX(0.9779);">commercial)</span>
<span class="t" style="left:652.20px;top:41.62px;font-size:12.5px;color:#e8e8e8;transform:scaleX(1.0107);">Sans nom*</span>
<span class="t" style="left:1381.40px;top:39.84px;font-size:12px;color:#eeeeee;transform:scaleX(0.9409);">JU</span>
<span class="t" style="left:151.30px;top:66.81px;font-size:10.5px;color:#e4e6ea;transform:scaleX(0.9269);">SOLIDE</span>
<span class="t" style="left:239.50px;top:66.81px;font-size:10.5px;color:#e4e6ea;transform:scaleX(0.9229);">SURFACIQUE</span>
<span class="t" style="left:357.00px;top:66.81px;font-size:10.5px;color:#e4e6ea;transform:scaleX(0.9901);">MAILLAGE</span>
<span class="t" style="left:460.00px;top:66.81px;font-size:10.5px;color:#e4e6ea;transform:scaleX(0.9126);">TÔLERIE</span>
<span class="t" style="left:553.00px;top:66.81px;font-size:10.5px;color:#e4e6ea;transform:scaleX(0.9502);">PLASTIQUE</span>
<span class="t" style="left:661.00px;top:66.81px;font-size:10.5px;color:#e4e6ea;transform:scaleX(0.9105);">GÉRER</span>
<span class="t" style="left:744.00px;top:66.81px;font-size:10.5px;color:#e4e6ea;transform:scaleX(0.9233);">UTILITAIRES</span>
<span class="t" style="left:862.00px;top:66.81px;font-size:10.5px;color:#ffffff;font-weight:700;transform:scaleX(0.9500);">ESQUISSE</span>
<span class="t" style="left:237.00px;top:127.86px;font-size:10.5px;color:#e4e6ea;transform:scaleX(0.8978);">CRÉER</span>
<span class="t" style="left:456.25px;top:127.86px;font-size:10.5px;color:#e4e6ea;transform:scaleX(0.8913);">MODIFIER</span>
<span class="t" style="left:650.25px;top:127.86px;font-size:10.5px;color:#e4e6ea;transform:scaleX(0.9368);">CONTRAINTES</span>
<span class="t" style="left:822.25px;top:127.86px;font-size:10.5px;color:#e4e6ea;transform:scaleX(0.9173);">CONFIGURER</span>
<span class="t" style="left:931.25px;top:127.86px;font-size:10.5px;color:#e4e6ea;transform:scaleX(0.8944);">INSPECTER</span>
<span class="t" style="left:1034.25px;top:127.86px;font-size:10.5px;color:#e4e6ea;transform:scaleX(0.8998);">INSÉRER</span>
<span class="t" style="left:1128.25px;top:127.86px;font-size:10.5px;color:#e4e6ea;transform:scaleX(0.9151);">SÉLECTIONNER</span>
<span class="t" style="left:1251.30px;top:127.86px;font-size:10.5px;color:#e4e6ea;transform:scaleX(0.9172);">TERMINER L'ESQUISSE</span>
<span class="t" style="left:28.25px;top:96.11px;font-size:10.5px;color:#ffffff;font-weight:700;transform:scaleX(0.9821);">CONCEPTION</span>
<span class="t" style="left:33.80px;top:157.54px;font-size:12px;color:#e8e8e8;transform:scaleX(0.9510);">NAVIGATEUR</span>
<span class="t" style="left:99.50px;top:184.69px;font-size:11px;color:#e4e6ea;transform:scaleX(0.9915);">(Non enregistré)</span>
<span class="t" style="left:92.20px;top:208.69px;font-size:11px;color:#e4e6ea;transform:scaleX(0.9699);">Paramètres du document</span>
<span class="t" style="left:92.20px;top:232.69px;font-size:11px;color:#e4e6ea;transform:scaleX(0.9813);">Vues nommées</span>
<span class="t" style="left:117.00px;top:256.69px;font-size:11px;color:#e4e6ea;transform:scaleX(0.9588);">Origine</span>
<span class="t" style="left:117.00px;top:280.69px;font-size:11px;color:#ffffff;font-weight:700;transform:scaleX(1.0311);">Cube_base:1</span>
<span class="t" style="left:494.30px;top:156.99px;font-size:11px;color:#f0f0f0;font-weight:700;transform:scaleX(1.0616);">Non enregistré:</span>
<span class="t" style="left:604.00px;top:156.99px;font-size:11px;color:#e4e6ea;transform:scaleX(0.9914);">Les modifications risquent d'être perdues</span>
<span class="t" style="left:866.80px;top:156.99px;font-size:11px;color:#3f6ea6;transform:scaleX(0.9833);">Enregistrer</span>
<span class="t" style="left:1186.90px;top:277.84px;font-size:12px;color:#e8e8e8;transform:scaleX(0.9059);">PALETTE D'ESQUISSES</span>
<span class="t" style="left:1183.00px;top:305.29px;font-size:11px;color:#f0f0f0;font-weight:700;transform:scaleX(1.0397);">Options de fonction</span>
<span class="t" style="left:1171.20px;top:334.69px;font-size:11px;color:#e4e6ea;transform:scaleX(0.9711);">Rectangle</span>
<span class="t" style="left:1183.00px;top:404.69px;font-size:11px;color:#f0f0f0;font-weight:700;transform:scaleX(1.0300);">Options</span>
<span class="t" style="left:1171.00px;top:434.69px;font-size:11px;color:#e4e6ea;transform:scaleX(0.9627);">Type de ligne</span>
<span class="t" style="left:1171.00px;top:464.69px;font-size:11px;color:#e4e6ea;transform:scaleX(0.9769);">Regarder</span>
<span class="t" style="left:1171.00px;top:494.69px;font-size:11px;color:#e4e6ea;transform:scaleX(0.9794);">Grille d'esquisse</span>
<span class="t" style="left:1171.00px;top:524.69px;font-size:11px;color:#e4e6ea;transform:scaleX(1.0329);">Accrochage</span>
<span class="t" style="left:1171.00px;top:554.69px;font-size:11px;color:#e4e6ea;transform:scaleX(0.9812);">Section</span>
<span class="t" style="left:1171.00px;top:584.69px;font-size:11px;color:#e4e6ea;transform:scaleX(0.9815);">Profil</span>
<span class="t" style="left:1171.00px;top:614.69px;font-size:11px;color:#e4e6ea;transform:scaleX(0.9322);">Points</span>
<span class="t" style="left:1171.00px;top:644.69px;font-size:11px;color:#e4e6ea;transform:scaleX(0.9605);">Cotes</span>
<span class="t" style="left:1171.00px;top:674.69px;font-size:11px;color:#e4e6ea;transform:scaleX(0.9706);">Contraintes</span>
<span class="t" style="left:1171.00px;top:704.69px;font-size:11px;color:#e4e6ea;transform:scaleX(0.9747);">Géométries projetées</span>
<span class="t" style="left:1171.00px;top:734.69px;font-size:11px;color:#e4e6ea;transform:scaleX(0.9873);">Géométries de construction</span>
<span class="t" style="left:1171.00px;top:764.69px;font-size:11px;color:#6f7886;transform:scaleX(0.9619);">Esquisse 3D</span>
<span class="t" style="left:1269.20px;top:798.96px;font-size:12.8px;color:#e8e8e8;transform:scaleX(1.0206);">Terminer l'esquisse</span>
<span class="t" style="left:33.50px;top:870.84px;font-size:12px;color:#e8e8e8;transform:scaleX(0.9422);">COMMENTAIRES</span>
<span class="t" style="left:1333.20px;top:202.09px;font-size:15.6px;color:#9c9c9c;font-weight:700;transform:scaleX(0.7039);">HAUT</span>
</div>
</body>
</html>
